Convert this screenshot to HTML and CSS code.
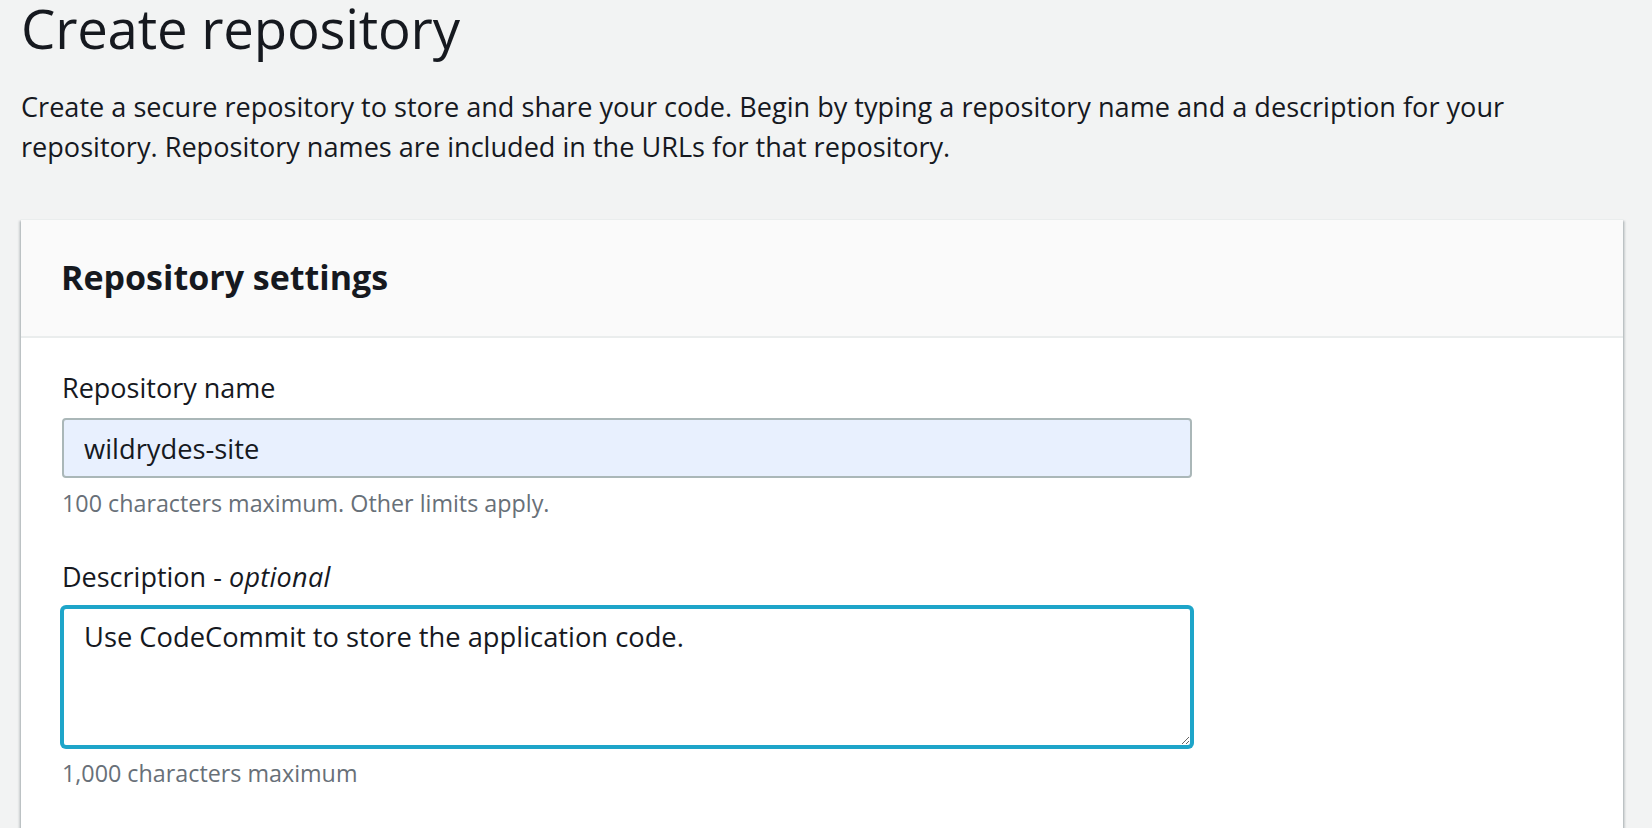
FILE: index.html
```html
<!DOCTYPE html>
<html lang="en">
<head>
<meta charset="utf-8">
<title>Create repository</title>
<link rel="stylesheet" href="styles.css">
</head>
<body>
<main class="page">
  <h1 class="page-title">Create repository</h1>
  <p class="page-desc">Create a secure repository to store and share your code. Begin by typing a repository name and a description for your repository. Repository names are included in the URLs for that repository.</p>

  <section class="card">
    <header class="card-header">
      <h2 class="card-title">Repository settings</h2>
    </header>
    <div class="card-body">
      <div class="field">
        <label class="field-label" for="repo-name">Repository name</label>
        <input class="text-input" id="repo-name" type="text" value="wildrydes-site">
        <div class="field-hint">100 characters maximum. Other limits apply.</div>
      </div>
      <div class="field field-spaced">
        <label class="field-label" for="repo-desc">Description - <i class="optional">optional</i></label>
        <textarea class="text-area" id="repo-desc">Use CodeCommit to store the application code.</textarea>
        <div class="field-hint field-hint-area">1,000 characters maximum</div>
      </div>
    </div>
  </section>
</main>
</body>
</html>
```

FILE: styles.css
```css
* {
  box-sizing: border-box;
}

html, body {
  margin: 0;
  padding: 0;
}

body {
  background: #f2f3f3;
  color: #16191f;
  font-family: "Open Sans", "Noto Sans", Arial, sans-serif;
  overflow: hidden;
}

.page {
  padding: 1px 29px 0 21px;
}

.page-title {
  margin: 0;
  font-size: 54.5px;
  line-height: 54px;
  font-weight: 400;
  letter-spacing: -0.2px;
}

.page-desc {
  margin: 32px 0 0 0;
  max-width: 1540px;
  font-size: 27.1px;
  line-height: 40px;
}

.card {
  margin-top: 52px;
  background: #ffffff;
  border-top: 1px solid #eaeded;
  box-shadow: 0 2px 2px 0 rgba(0, 28, 36, 0.3), 2px 2px 2px 0 rgba(0, 28, 36, 0.15), -2px 2px 2px 0 rgba(0, 28, 36, 0.15);
}

.card-header {
  background: #fafafa;
  border-bottom: 2px solid #eaeded;
  padding: 37px 40px 39px 40px;
}

.card-title {
  margin: 0;
  font-size: 34px;
  line-height: 40px;
  font-weight: 700;
}

.card-body {
  padding: 30px 40px 60px 41px;
}

.field {
  display: flex;
  flex-direction: column;
  align-items: flex-start;
}

.field-spaced {
  margin-top: 38px;
}

.field-label {
  font-size: 27px;
  line-height: 40px;
  margin-bottom: 10px;
}

.optional {
  font-style: italic;
  letter-spacing: 0.3px;
}

.text-input,
.text-area {
  display: block;
  width: 1130px;
  font-family: inherit;
  font-size: 27.3px;
  line-height: 40px;
  color: #16191f;
  border-radius: 4px;
  margin: 0;
}

.text-input {
  height: 60px;
  padding: 8px 20px;
  background: #e8f0fe;
  border: 2px solid #aab7b8;
  outline: none;
}

.text-area {
  height: 140px;
  padding: 8px 20px;
  background: #ffffff;
  border: 2px solid #1ea5c9;
  box-shadow: 0 0 0 2px #1ea5c9;
  outline: none;
  resize: both;
}

.field-hint {
  margin-top: 9px;
  font-size: 23.3px;
  line-height: 32px;
  color: #687078;
}

.field-hint-area {
  margin-top: 10px;
}
```
